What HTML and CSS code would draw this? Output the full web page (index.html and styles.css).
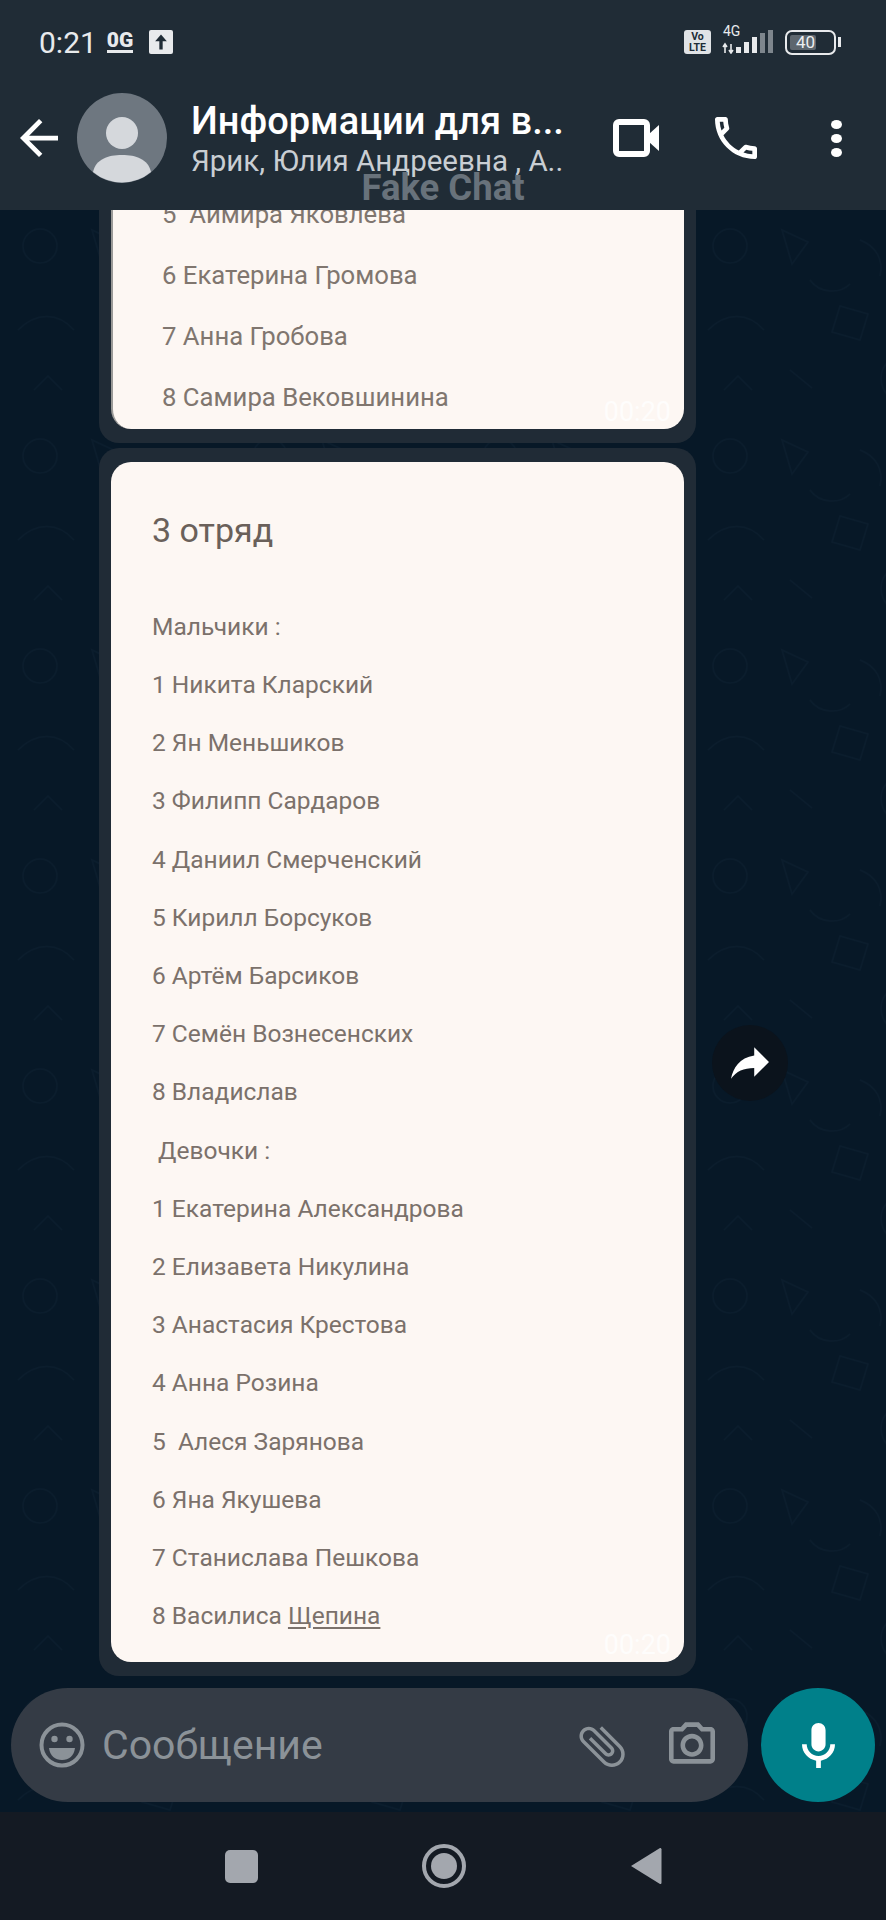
FILE: index.html
```html
<!DOCTYPE html>
<html lang="ru">
<head>
    <meta charset="UTF-8">
    <meta name="viewport" content="width=device-width, initial-scale=1.0">
    <title>Fake Chat</title>
    <link rel="stylesheet" href="styles.css">
</head>
<body>
    <div class="phone">
        <header class="top">
            <div class="status">
                <span class="clock">0:21</span>
                <span class="data-badge">0G</span>
                <span class="upload-badge">
                    <svg viewBox="0 0 24 24" width="20" height="20"><path d="M12 3l7 8h-5v10h-4V11H5z" fill="#202c36"/></svg>
                </span>
                <span class="status-right">
                    <span class="volte">Vo<br>LTE</span>
                    <span class="signal">
                        <span class="signal-label">4G</span>
                        <svg viewBox="0 0 52 24" width="52" height="24">
                            <path d="M3 14v9M1 17l2-3 2 3M9 14v9M7 20l2 3 2-3" stroke="#e8eaec" stroke-width="1.6" fill="none"/>
                            <rect x="14" y="17" width="5" height="6" fill="#e8eaec"/>
                            <rect x="22" y="12" width="5" height="11" fill="#e8eaec"/>
                            <rect x="30" y="7" width="5" height="16" fill="#e8eaec"/>
                            <rect x="38" y="3" width="5" height="20" fill="#7e868d"/>
                            <rect x="46" y="0" width="5" height="23" fill="#7e868d"/>
                        </svg>
                    </span>
                    <span class="battery"><span class="battery-level">40</span></span>
                </span>
            </div>
            <div class="toolbar">
                <svg class="back" viewBox="4 4 16 16" width="38" height="38"><path d="M20 11H7.83l5.59-5.59L12 4l-8 8 8 8 1.41-1.41L7.83 13H20v-2z" fill="#fff"/></svg>
                <svg class="avatar" viewBox="0 0 90 90" width="90" height="90">
                    <circle cx="45" cy="45" r="45" fill="#6e7780"/>
                    <ellipse cx="45" cy="40" rx="16" ry="16" fill="#d5d8dc"/>
                    <path d="M16 79c3-13 15-17 29-17s26 4 29 17a45 45 0 0 1-58 0z" fill="#d5d8dc"/>
                </svg>
                <div class="chat-name">
                    <div class="chat-title">Информации для в...</div>
                    <div class="chat-members">Ярик, Юлия Андреевна , А..</div>
                </div>
                <svg class="video-icon" viewBox="0 0 46 38" width="46" height="38">
                    <rect x="3" y="3" width="31" height="32" rx="3" fill="none" stroke="#fff" stroke-width="6"/>
                    <path d="M36 15l10-9v26l-10-9z" fill="#fff"/>
                </svg>
                <svg class="call-icon" viewBox="3 3 18 18" width="42" height="42"><path d="M6.54 5c.06.89.21 1.76.45 2.59l-1.2 1.2c-.41-1.2-.67-2.47-.76-3.79h1.51m9.86 12.02c.85.24 1.72.39 2.6.45v1.49c-1.32-.09-2.59-.35-3.8-.75l1.2-1.19M7.5 3H4c-.55 0-1 .45-1 1 0 9.39 7.61 17 17 17 .55 0 1-.45 1-1v-3.49c0-.55-.45-1-1-1-1.24 0-2.45-.2-3.57-.57-.1-.04-.21-.05-.31-.05-.26 0-.51.1-.71.29l-2.2 2.2c-2.83-1.45-5.15-3.76-6.59-6.59l2.2-2.2c.28-.28.36-.67.25-1.02C8.7 6.45 8.5 5.25 8.5 4c0-.55-.45-1-1-1z" fill="#fff"/></svg>
                <div class="menu-dots"><i></i><i></i><i></i></div>
            </div>
            <div class="watermark">Fake Chat</div>
        </header>

        <main class="chat">
            <svg class="doodles" width="886" height="1602">
                <defs>
                    <pattern id="doodle" width="230" height="210" patternUnits="userSpaceOnUse">
                        <g fill="none" stroke="#0b1d2d" stroke-width="1.5">
                            <circle cx="40" cy="36" r="17"/>
                            <path d="M92 20l26 12-16 22zM18 120c18-18 40-18 56 0M150 96l28 8-8 26-28-8zM100 160l22 18M170 30c16 6 24 20 20 36M34 180l14-14 14 14M200 150c-12 10-12 26 0 38M120 70c10 14 30 14 40 4"/>
                        </g>
                    </pattern>
                </defs>
                <rect width="886" height="1602" fill="url(#doodle)"/>
            </svg>

            <div class="messages">
                <div class="bubble">
                    <div class="photo photo-top">
                        <p>5&nbsp; Аимира Яковлева</p>
                        <p>6 Екатерина Громова</p>
                        <p>7 Анна Гробова</p>
                        <p>8 Самира Вековшинина</p>
                        <span class="stamp">00:20</span>
                    </div>
                </div>
                <div class="bubble">
                    <div class="photo photo-main">
                        <h2>3 отряд</h2>
                        <p>Мальчики :</p>
                        <p>1 Никита Кларский</p>
                        <p>2 Ян Меньшиков</p>
                        <p>3 Филипп Сардаров</p>
                        <p>4 Даниил Смерченский</p>
                        <p>5 Кирилл Борсуков</p>
                        <p>6 Артём Барсиков</p>
                        <p>7 Семён Вознесенских</p>
                        <p>8 Владислав</p>
                        <p>&nbsp;Девочки :</p>
                        <p>1 Екатерина Александрова</p>
                        <p>2 Елизавета Никулина</p>
                        <p>3 Анастасия Крестова</p>
                        <p>4 Анна Розина</p>
                        <p>5&nbsp; Алеся Зарянова</p>
                        <p>6 Яна Якушева</p>
                        <p>7 Станислава Пешкова</p>
                        <p>8 Василиса <u>Щепина</u></p>
                        <span class="stamp">00:20</span>
                    </div>
                </div>
            </div>

            <div class="forward">
                <svg viewBox="3 5 18 15" width="38" height="32"><path d="M14 9V5l7 7-7 7v-4.1c-5 0-8.500 1.600-11 5.100 1-5 4-10 11-11z" fill="#fff"/></svg>
            </div>

            <div class="compose">
                <div class="input">
                    <svg class="emoji" viewBox="0 0 46 46" width="46" height="46">
                        <circle cx="23" cy="23" r="20.5" fill="none" stroke="#8b9298" stroke-width="4"/>
                        <circle cx="15.5" cy="17" r="3.2" fill="#8b9298"/>
                        <circle cx="30.5" cy="17" r="3.2" fill="#8b9298"/>
                        <path d="M10 26h26c-1 8-6 12-13 12s-12-4-13-12z" fill="#8b9298"/>
                    </svg>
                    <span class="placeholder">Сообщение</span>
                    <svg class="clip" viewBox="0 0 24 24" width="56" height="56"><path transform="rotate(-45 12 12)" d="M16.5 6v11.5c0 2.21-1.79 4-4 4s-4-1.79-4-4V5c0-1.38 1.12-2.5 2.5-2.5s2.5 1.12 2.5 2.5v10.5c0 .55-.45 1-1 1s-1-.45-1-1V6H10v9.5c0 1.38 1.12 2.5 2.5 2.5s2.5-1.12 2.5-2.5V5c0-2.21-1.79-4-4-4S7 2.79 7 5v12.5c0 3.04 2.46 5.5 5.5 5.5s5.5-2.46 5.5-5.5V6h-1.5z" fill="#8b9298"/></svg>
                    <svg class="camera" viewBox="2 2 20 18" width="46" height="42"><path d="M20 4h-3.17L15 2H9L7.17 4H4c-1.1 0-2 .9-2 2v12c0 1.1.9 2 2 2h16c1.1 0 2-.9 2-2V6c0-1.1-.9-2-2-2zm0 14H4V6h4.05l1.83-2h4.24l1.83 2H20v12zM12 7c-2.76 0-5 2.24-5 5s2.24 5 5 5 5-2.24 5-5-2.24-5-5-5zm0 8c-1.65 0-3-1.35-3-3s1.35-3 3-3 3 1.35 3 3-1.35 3-3 3z" fill="#8b9298"/></svg>
                </div>
                <div class="mic">
                    <svg viewBox="5 2 14 19" width="33" height="45"><path d="M12 14c1.66 0 3-1.34 3-3V5c0-1.66-1.34-3-3-3S9 3.34 9 5v6c0 1.66 1.34 3 3 3z M17 11c0 2.76-2.24 5-5 5s-5-2.24-5-5H5c0 3.53 2.61 6.43 6 6.92V21h2v-3.08c3.39-.49 6-3.39 6-6.92h-2z" fill="#fff"/></svg>
                </div>
            </div>
        </main>

        <nav class="navbar">
            <span class="nav-square"></span>
            <span class="nav-home"><i></i></span>
            <svg viewBox="0 0 32 38" width="32" height="38"><path d="M30 1c1 0 1.500 .6 1.500 1.500v33c0 1-.5 1.500-1.500 1.500L1 19z" fill="#a3a7ae"/></svg>
        </nav>
    </div>
</body>
</html>
```

FILE: styles.css
```css
* {
    box-sizing: border-box;
}
body {
    margin: 0;
    background-color: #071827;
    font-family: Roboto, "Noto Sans", sans-serif;
}
.phone {
    display: flex;
    flex-direction: column;
    width: 886px;
    height: 1920px;
    overflow: hidden;
}

/* header */
.top {
    position: relative;
    flex: none;
    height: 210px;
    padding-top: 30px;
    background-color: #202c36;
    color: white;
}
.status {
    display: flex;
    align-items: center;
    height: 24px;
    padding: 0 50px 0 39px;
}
.clock {
    font-size: 30px;
    color: #e8eaec;
}
.data-badge {
    margin-left: 10px;
    border-bottom: 3px solid #e8eaec;
    font-size: 21px;
    font-weight: 900;
    line-height: 19px;
    color: #e8eaec;
}
.upload-badge {
    display: flex;
    align-items: center;
    justify-content: center;
    width: 24px;
    height: 24px;
    margin-left: 16px;
    border-radius: 2px;
    background-color: #e8eaec;
}
.status-right {
    display: flex;
    align-items: center;
    margin-left: auto;
}
.volte {
    width: 27px;
    height: 24px;
    padding-top: 1px;
    border-radius: 3px;
    background-color: #e0e3e6;
    color: #202c36;
    font-size: 10.5px;
    font-weight: 700;
    line-height: 11px;
    text-align: center;
}
.signal {
    position: relative;
    margin-left: 11px;
    line-height: 0;
}
.signal-label {
    position: absolute;
    top: -6px;
    left: 1px;
    font-size: 14px;
    line-height: 14px;
    color: #e8eaec;
}
.battery {
    position: relative;
    display: flex;
    width: 51px;
    height: 25px;
    margin-left: 11px;
    padding: 3px;
    border: 2px solid #e8eaec;
    border-radius: 7px;
}
.battery::after {
    content: "";
    position: absolute;
    top: 5px;
    right: -7px;
    width: 3px;
    height: 10px;
    background-color: #e8eaec;
}
.battery-level {
    width: 26px;
    padding-left: 6px;
    border-radius: 2px;
    background-color: #5d666e;
    font-size: 17px;
    line-height: 15px;
    color: #eceef0;
    white-space: nowrap;
}
.toolbar {
    display: flex;
    align-items: center;
    height: 90px;
    margin-top: 39px;
    padding-left: 20px;
}
.avatar {
    flex: none;
    margin-left: 19px;
}
.chat-name {
    width: 385px;
    margin-left: 24px;
    white-space: nowrap;
}
.chat-title {
    font-size: 38px;
    font-weight: 500;
    line-height: 46px;
}
.chat-members {
    font-size: 29.5px;
    line-height: 34px;
    color: #c9ced3;
}
.video-icon {
    flex: none;
    margin-left: 37px;
}
.call-icon {
    flex: none;
    margin-left: 56px;
}
.menu-dots {
    display: flex;
    flex-direction: column;
    gap: 5px;
    margin-left: 74px;
}
.menu-dots i {
    display: block;
    width: 11px;
    height: 9px;
    border-radius: 50%;
    background-color: white;
}
.watermark {
    position: absolute;
    left: 0;
    right: 0;
    top: 170px;
    font-size: 36.5px;
    font-weight: 700;
    line-height: 36px;
    text-align: center;
    color: #68727b;
}

/* chat area */
.chat {
    position: relative;
    display: flex;
    flex: 1;
    flex-direction: column;
    justify-content: flex-end;
    min-height: 0;
    overflow: hidden;
    background-color: #071827;
}
.doodles {
    position: absolute;
    top: 0;
    left: 0;
}
.messages {
    position: relative;
    display: flex;
    flex-direction: column;
    flex: none;
    gap: 5px;
    padding-left: 99px;
}
.bubble {
    flex: none;
    width: 597px;
    padding: 14px 12px;
    border-radius: 20px;
    background-color: #202b36;
}
.photo {
    position: relative;
    border-radius: 20px;
    background-color: #fdf7f3;
    color: #7b716b;
}
.photo p {
    margin: 0;
    font-size: 24.5px;
}
.photo-top {
    padding: 0 0 1px 49px;
    border-left: 2px solid #9a9a98;
}
.photo-top p {
    font-size: 25.7px;
    line-height: 61px;
    color: #80766f;
}
.photo-main {
    padding: 43px 0 16.5px 41px;
}
.photo-main h2 {
    margin: 0 0 42.5px;
    font-size: 34px;
    font-weight: 400;
    line-height: 50px;
    color: #6a605a;
}
.photo-main p {
    line-height: 58.2px;
}
.photo-main u {
    text-underline-offset: 3px;
}
.stamp {
    position: absolute;
    right: 13px;
    bottom: 1px;
    font-size: 27px;
    color: rgba(255,255,255,0.75);
}
.forward {
    position: absolute;
    top: 815px;
    left: 712px;
    display: flex;
    align-items: center;
    justify-content: center;
    width: 76px;
    height: 76px;
    border-radius: 50%;
    background-color: #0b131c;
}

/* message box */
.compose {
    position: relative;
    display: flex;
    flex: none;
    gap: 13px;
    height: 114px;
    margin: 12px 0 10px;
    padding: 0 11px;
}
.input {
    display: flex;
    flex: 1;
    align-items: center;
    padding: 0 33px 0 28px;
    border-radius: 57px;
    background-color: #343b45;
}
.emoji {
    flex: none;
    margin-top: -1px;
}
.placeholder {
    margin-left: 17px;
    font-size: 41px;
    color: #8b9298;
}
.clip {
    margin-left: auto;
    margin-top: 2px;
}
.camera {
    margin-left: 39px;
    margin-top: -4px;
}
.mic {
    display: flex;
    flex: none;
    align-items: center;
    justify-content: center;
    width: 114px;
    height: 114px;
    border-radius: 50%;
    background-color: #00808a;
}

/* android buttons */
.navbar {
    display: flex;
    flex: none;
    align-items: center;
    justify-content: center;
    gap: 164px;
    height: 108px;
    background-color: #141a23;
}
.nav-square {
    width: 33px;
    height: 33px;
    border-radius: 5px;
    background-color: #a3a7ae;
}
.nav-home {
    display: flex;
    align-items: center;
    justify-content: center;
    width: 44px;
    height: 44px;
    border: 4px solid #a3a7ae;
    border-radius: 50%;
}
.nav-home i {
    width: 26px;
    height: 26px;
    border-radius: 50%;
    background-color: #a3a7ae;
}
```
